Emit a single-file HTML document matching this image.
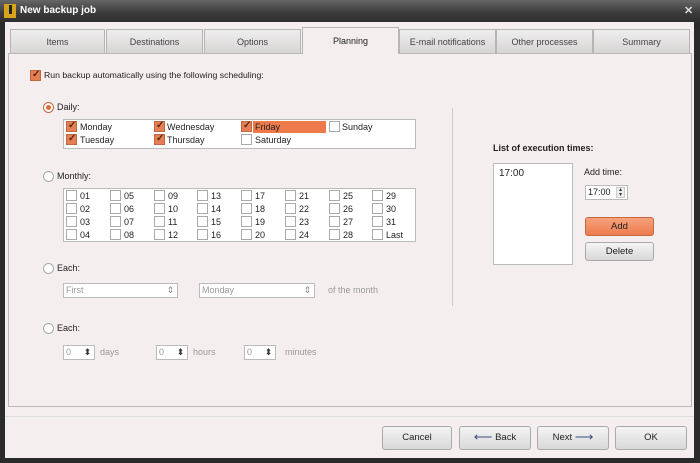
<!DOCTYPE html><html><head><style>
*{margin:0;padding:0;box-sizing:border-box}
body{width:700px;height:463px;overflow:hidden;background:#2b2b2b;font-family:"Liberation Sans",sans-serif;font-size:9px;color:#222;position:relative}
.a{position:absolute}
.win{left:5px;top:22px;width:689px;height:436px;background:#f4efee}
.tb{left:0;top:0;width:700px;height:22px;background:linear-gradient(#666,#3a3a3a 60%,#2e2e2e)}
.tab{position:absolute;top:29px;height:24px;background:linear-gradient(#eee,#d8d4d4);border:1px solid #b8b4b4;border-bottom:none;text-align:center;line-height:24px;color:#444}
.panel{left:8px;top:53px;width:684px;height:354px;border:1px solid #bcb8b8;background:#f4efee}
.cb{position:absolute;width:11px;height:11px;border:1px solid #aaa;background:#fff}
.ck{background:#e57e55;border-color:#c0683f}
.ck:after{content:"✓";position:absolute;left:1px;top:-2px;font-size:10px;color:#5a2a10;font-weight:bold}
.t{position:absolute;white-space:nowrap}
.rad{position:absolute;width:11px;height:11px;border-radius:50%;border:1px solid #aaa;background:#fff}
.box{position:absolute;background:#fff;border:1px solid #bbb}
.btn{position:absolute;height:24px;border:1px solid #aaa;border-radius:3px;background:linear-gradient(#f4f4f4,#d8d8d8);text-align:center;line-height:22px;font-size:9.5px}
.btn b{font-weight:normal;color:#3a4d80;font-size:13px;display:inline-block;line-height:10px;vertical-align:-1px}
.dis{color:#999}
.sp{position:absolute;height:15px;border:1px solid #bbb;background:#fff;color:#999;padding-left:2px;line-height:13px}
.sp i{position:absolute;right:2px;top:1px;width:9px;height:11px;font-style:normal;color:#333;font-size:9px;line-height:11px;text-align:center}
</style></head><body>
<div class="a tb"></div>
<div class="a" style="left:4px;top:4px;width:12px;height:14px;background:#d9a21b"></div>
<div class="a" style="left:9px;top:5px;width:3px;height:9px;background:#222"></div>
<div class="t" style="left:20px;top:5px;color:#fff;font-weight:bold;font-size:10px">New backup job</div>
<div class="t" style="left:684px;top:4px;color:#ddd;font-weight:bold;font-size:11px">✕</div>
<div class="a win"></div>
<div class="tab" style="left:10px;width:95px">Items</div>
<div class="tab" style="left:106px;width:97px">Destinations</div>
<div class="tab" style="left:204px;width:97px">Options</div>
<div class="tab" style="left:399px;width:97px">E-mail notifications</div>
<div class="tab" style="left:496px;width:97px">Other processes</div>
<div class="tab" style="left:593px;width:97px">Summary</div>
<div class="a panel"></div>
<div class="tab" style="left:302px;top:27px;height:27px;width:97px;background:#f4efee;line-height:26px;color:#222">Planning</div>

<div class="cb ck" style="left:30px;top:70px"></div>
<div class="t" style="left:44px;top:70px;font-size:8.7px">Run backup automatically using the following scheduling:</div>

<div class="rad" style="left:43px;top:102px;border-color:#c0683f"></div><div class="a" style="left:46px;top:105px;width:5px;height:5px;border-radius:50%;background:#e06a3a"></div>
<div class="t" style="left:57px;top:102px">Daily:</div>
<div class="box" style="left:63px;top:119px;width:353px;height:30px"></div>
<div class="a" style="left:253px;top:121px;width:73px;height:12px;background:#ee7a4c"></div>
<div class="cb ck" style="left:66px;top:121px"></div><div class="t" style="left:80px;top:122px">Monday</div>
<div class="cb ck" style="left:66px;top:134px"></div><div class="t" style="left:80px;top:135px">Tuesday</div>
<div class="cb ck" style="left:154px;top:121px"></div><div class="t" style="left:167px;top:122px">Wednesday</div>
<div class="cb ck" style="left:154px;top:134px"></div><div class="t" style="left:167px;top:135px">Thursday</div>
<div class="cb ck" style="left:241px;top:121px"></div><div class="t" style="left:255px;top:122px">Friday</div>
<div class="cb" style="left:241px;top:134px"></div><div class="t" style="left:255px;top:135px">Saturday</div>
<div class="cb" style="left:329px;top:121px"></div><div class="t" style="left:342px;top:122px">Sunday</div>

<div class="rad" style="left:43px;top:171px"></div><div class="t" style="left:57px;top:171px">Monthly:</div>
<div class="box" style="left:63px;top:188px;width:353px;height:54px"></div>
<div id="g"></div>

<div class="rad" style="left:43px;top:263px"></div><div class="t" style="left:57px;top:263px">Each:</div>
<div class="sp" style="left:63px;top:283px;width:115px">First<i style="color:#888">⇕</i></div>
<div class="sp" style="left:199px;top:283px;width:116px">Monday<i style="color:#888">⇕</i></div>
<div class="t dis" style="left:328px;top:285px">of the month</div>

<div class="rad" style="left:43px;top:323px"></div><div class="t" style="left:57px;top:323px">Each:</div>
<div class="sp" style="left:63px;top:345px;width:32px">0<i>⬍</i></div><div class="t dis" style="left:100px;top:347px">days</div>
<div class="sp" style="left:156px;top:345px;width:32px">0<i>⬍</i></div><div class="t dis" style="left:193px;top:347px">hours</div>
<div class="sp" style="left:244px;top:345px;width:32px">0<i>⬍</i></div><div class="t dis" style="left:285px;top:347px">minutes</div>

<div class="a" style="left:452px;top:108px;width:1px;height:198px;background:#ccc"></div>
<div class="t" style="left:493px;top:143px;font-weight:bold">List of execution times:</div>
<div class="box" style="left:493px;top:163px;width:80px;height:102px"></div>
<div class="t" style="left:499px;top:168px;font-size:10px">17:00</div>
<div class="t" style="left:584px;top:167px">Add time:</div>
<div class="sp" style="left:585px;top:185px;width:43px;color:#222">17:00<i style="border:1px solid #ccc;background:#eee;font-size:6px;line-height:5px">▴<br>▾</i></div>
<div class="btn" style="left:585px;top:217px;width:69px;height:19px;line-height:17px;background:linear-gradient(#f7a27c,#ec7b4e);border-color:#c8683f">Add</div>
<div class="btn" style="left:585px;top:242px;width:69px;height:19px;line-height:17px">Delete</div>

<div class="a" style="left:5px;top:416px;width:689px;height:1px;background:#ddd"></div>
<div class="btn" style="left:382px;top:426px;width:70px">Cancel</div>
<div class="btn" style="left:459px;top:426px;width:72px"><b>⟵</b> Back</div>
<div class="btn" style="left:537px;top:426px;width:72px">Next <b>⟶</b></div>
<div class="btn" style="left:615px;top:426px;width:72px">OK</div>
<script>
var h='',cols=[66,110,154,197,241,285,329,372],n=1;
for(var c=0;c<8;c++)for(var r=0;r<4;r++){var l=(c==7&&r==3)?'Last':(n<10?'0'+n:''+n);n++;
h+='<div class="cb" style="left:'+cols[c]+'px;top:'+(190+r*13)+'px"></div><div class="t" style="left:'+(cols[c]+14)+'px;top:'+(191+r*13)+'px">'+l+'</div>';}
document.getElementById('g').outerHTML=h;
</script>
</body></html>
